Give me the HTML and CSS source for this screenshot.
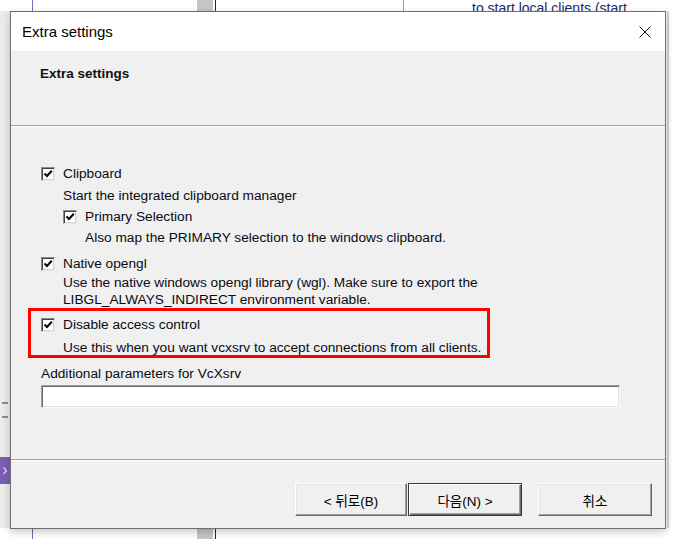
FILE: index.html
```html
<!DOCTYPE html>
<html lang="en">
<head>
<meta charset="utf-8">
<title>Extra settings</title>
<link rel="stylesheet" href="styles.css">
</head>
<body>
<div class="desk">
  <div class="bg-left"></div>
  <div class="bg-purple-line top"></div>
  <div class="bg-purple-line bottom"></div>
  <div class="bg-patch top"></div>
  <div class="bg-patch bottom"></div>
  <div class="bg-black-line top"></div>
  <div class="bg-black-line bottom"></div>
  <div class="bg-gray-line"></div>
  <div class="bg-right"></div>
  <div class="bg-text">to start local clients (start</div>
  <div class="bg-mark"></div>
  <div class="bg-tab">&#8250;</div>

  <div class="window">
    <div class="titlebar">
      <span class="title">Extra settings</span>
      <svg class="close" width="12" height="12" viewBox="0 0 12 12" aria-label="Close">
        <path d="M0.5 0.5 L11.5 11.5 M11.5 0.5 L0.5 11.5" stroke="#111" stroke-width="1" fill="none"/>
      </svg>
    </div>
    <div class="header">
      <h1 class="heading">Extra settings</h1>
    </div>
    <div class="content">
      <div class="row">
        <span class="cb"><svg width="10" height="10" viewBox="0 0 10 10"><path d="M1.5 4.5 L4 7 L8.8 1.8" stroke="#000" stroke-width="2" fill="none"/></svg></span>
        <span>Clipboard</span>
      </div>
      <div class="desc m5">Start the integrated clipboard manager</div>
      <div class="sub">
        <div class="row m4">
          <span class="cb"><svg width="10" height="10" viewBox="0 0 10 10"><path d="M1.5 4.5 L4 7 L8.8 1.8" stroke="#000" stroke-width="2" fill="none"/></svg></span>
          <span>Primary Selection</span>
        </div>
        <div class="desc m4">Also map the PRIMARY selection to the windows clipboard.</div>
      </div>
      <div class="row m9">
        <span class="cb"><svg width="10" height="10" viewBox="0 0 10 10"><path d="M1.5 4.5 L4 7 L8.8 1.8" stroke="#000" stroke-width="2" fill="none"/></svg></span>
        <span>Native opengl</span>
      </div>
      <div class="desc m2">Use the native windows opengl library (wgl). Make sure to export the<br>LIBGL_ALWAYS_INDIRECT environment variable.</div>
      <div class="highlight">
        <div class="row">
          <span class="cb"><svg width="10" height="10" viewBox="0 0 10 10"><path d="M1.5 4.5 L4 7 L8.8 1.8" stroke="#000" stroke-width="2" fill="none"/></svg></span>
          <span>Disable access control</span>
        </div>
        <div class="desc m6">Use this when you want vcxsrv to accept connections from all clients.</div>
      </div>
      <div class="label">Additional parameters for VcXsrv</div>
      <div class="input"></div>
    </div>
    <div class="footer">
      <button class="btn back">&lt; 뒤로(B)</button>
      <button class="btn next">다음(N) &gt;</button>
      <button class="btn cancel">취소</button>
    </div>
  </div>
</div>
</body>
</html>
```

FILE: styles.css
```css
html, body {
  margin: 0;
  padding: 0;
}
body {
  width: 679px;
  height: 539px;
  overflow: hidden;
  background: #fff;
  font-family: "Liberation Sans", Arial, sans-serif;
  color: #000;
}
.desk {
  position: relative;
  width: 679px;
  height: 539px;
  background: #fff;
  overflow: hidden;
}
.bg-left {
  position: absolute;
  left: 0;
  top: 11px;
  width: 10px;
  height: 517px;
  background: #ececec;
}
.bg-purple-line {
  position: absolute;
  left: 32px;
  width: 1px;
  height: 11px;
  background: #8467bd;
}
.bg-purple-line.top { top: 0; }
.bg-purple-line.bottom { top: 528px; }
.bg-patch {
  position: absolute;
  left: 197px;
  width: 16px;
  height: 11px;
  background: #c6c6c6;
}
.bg-patch.top { top: 0; }
.bg-patch.bottom { top: 528px; }
.bg-black-line {
  position: absolute;
  left: 215px;
  width: 1px;
  height: 11px;
  background: #222;
}
.bg-black-line.top { top: 0; }
.bg-black-line.bottom { top: 528px; }
.bg-gray-line {
  position: absolute;
  left: 403px;
  top: 0;
  width: 1px;
  height: 11px;
  background: #9a9a9a;
}
.bg-right {
  position: absolute;
  left: 667px;
  top: 11px;
  width: 2px;
  height: 517px;
  background: #d2d2d2;
}
.bg-text {
  position: absolute;
  left: 472px;
  top: 0;
  font-size: 14px;
  line-height: 16px;
  color: #1e2a66;
  white-space: nowrap;
}
.bg-mark {
  position: absolute;
  left: 2px;
  top: 402px;
  width: 6px;
  height: 16px;
  border-top: 2px solid #8a8a8a;
  border-bottom: 2px solid #8a8a8a;
  box-sizing: border-box;
}
.bg-tab {
  position: absolute;
  left: 0;
  top: 457px;
  width: 10px;
  height: 27px;
  background: #7b5fb6;
  color: #e6def4;
  font-size: 16px;
  line-height: 25px;
  text-align: center;
}

.window {
  position: absolute;
  left: 10px;
  top: 11px;
  width: 656px;
  height: 518px;
  box-sizing: border-box;
  border: 1px solid #6e6e6e;
  background: #f0f0f0;
  box-shadow: 0 3px 8px rgba(0, 0, 0, 0.22);
  display: flex;
  flex-direction: column;
}
.titlebar {
  flex: none;
  height: 39px;
  background: #fff;
  display: flex;
  align-items: center;
  justify-content: space-between;
  padding: 0 14px 0 11px;
}
.title {
  font-size: 15px;
  color: #000;
}
.close {
  display: block;
}
.header {
  flex: none;
  border-bottom: 1px solid #a0a0a0;
  padding: 14px 0 0 29px;
  box-sizing: border-box;
  height: 75px;
}
.heading {
  margin: 0;
  font-size: 13.5px;
  line-height: 18px;
  font-weight: bold;
  color: #111;
}
.content {
  flex: 1;
  border-top: 1px solid #fff;
  padding: 38px 0 0 30px;
  font-size: 13.7px;
  color: #0a0a14;
}
.row {
  display: flex;
  align-items: center;
  height: 17px;
  white-space: nowrap;
}
.cb {
  flex: none;
  width: 14px;
  height: 14px;
  box-sizing: border-box;
  margin-right: 8px;
  background: #fff;
  border: 1px solid;
  border-color: #8c8c8c #e8e8e8 #e8e8e8 #8c8c8c;
  box-shadow: inset 1px 1px #404040, inset -1px -1px #d4d4d4;
  display: flex;
  align-items: center;
  justify-content: center;
}
.cb svg {
  display: block;
}
.desc {
  line-height: 17px;
  padding-left: 22px;
  white-space: nowrap;
}
.sub {
  margin-left: 22px;
}
.m2 { margin-top: 2px; }
.m4 { margin-top: 4px; }
.m5 { margin-top: 5px; }
.m6 { margin-top: 6px; }
.m9 { margin-top: 9px; }
.highlight {
  position: relative;
  margin-top: 8px;
}
.highlight::after {
  content: "";
  position: absolute;
  left: -13px;
  top: -8px;
  width: 462px;
  height: 50px;
  box-sizing: border-box;
  border: 3px solid #ff0000;
}
.label {
  margin-top: 9px;
  line-height: 17px;
}
.input {
  margin-top: 3px;
  width: 579px;
  height: 23px;
  box-sizing: border-box;
  background: #fff;
  border: 1px solid;
  border-color: #a0a0a0 #f8f8f8 #f8f8f8 #a0a0a0;
  box-shadow: inset 1px 1px #696969, inset -1px -1px #e3e3e3;
}
.footer {
  flex: none;
  height: 69px;
  box-sizing: border-box;
  border-top: 1px solid #a0a0a0;
  box-shadow: inset 0 1px #fff;
  padding: 23px 13px 0 0;
  display: flex;
  justify-content: flex-end;
  align-items: flex-start;
}
.btn {
  height: 33px;
  box-sizing: border-box;
  background: #f0f0f0;
  border: 1px solid;
  border-color: #fff #696969 #696969 #fff;
  box-shadow: inset -1px -1px #a0a0a0, inset 1px 1px #e3e3e3;
  font-family: "Liberation Sans", "Noto Sans CJK KR", sans-serif;
  font-size: 13.5px;
  color: #000;
  padding: 0;
  margin: 0;
}
.back { width: 112px; }
.next {
  width: 114px;
  margin-left: 1px;
  border-color: #3a3a3a;
  box-shadow: inset 1px 1px #fff, inset -1px -1px #696969, inset -2px -2px #a0a0a0;
}
.cancel {
  width: 114px;
  margin-left: 16px;
}
```
